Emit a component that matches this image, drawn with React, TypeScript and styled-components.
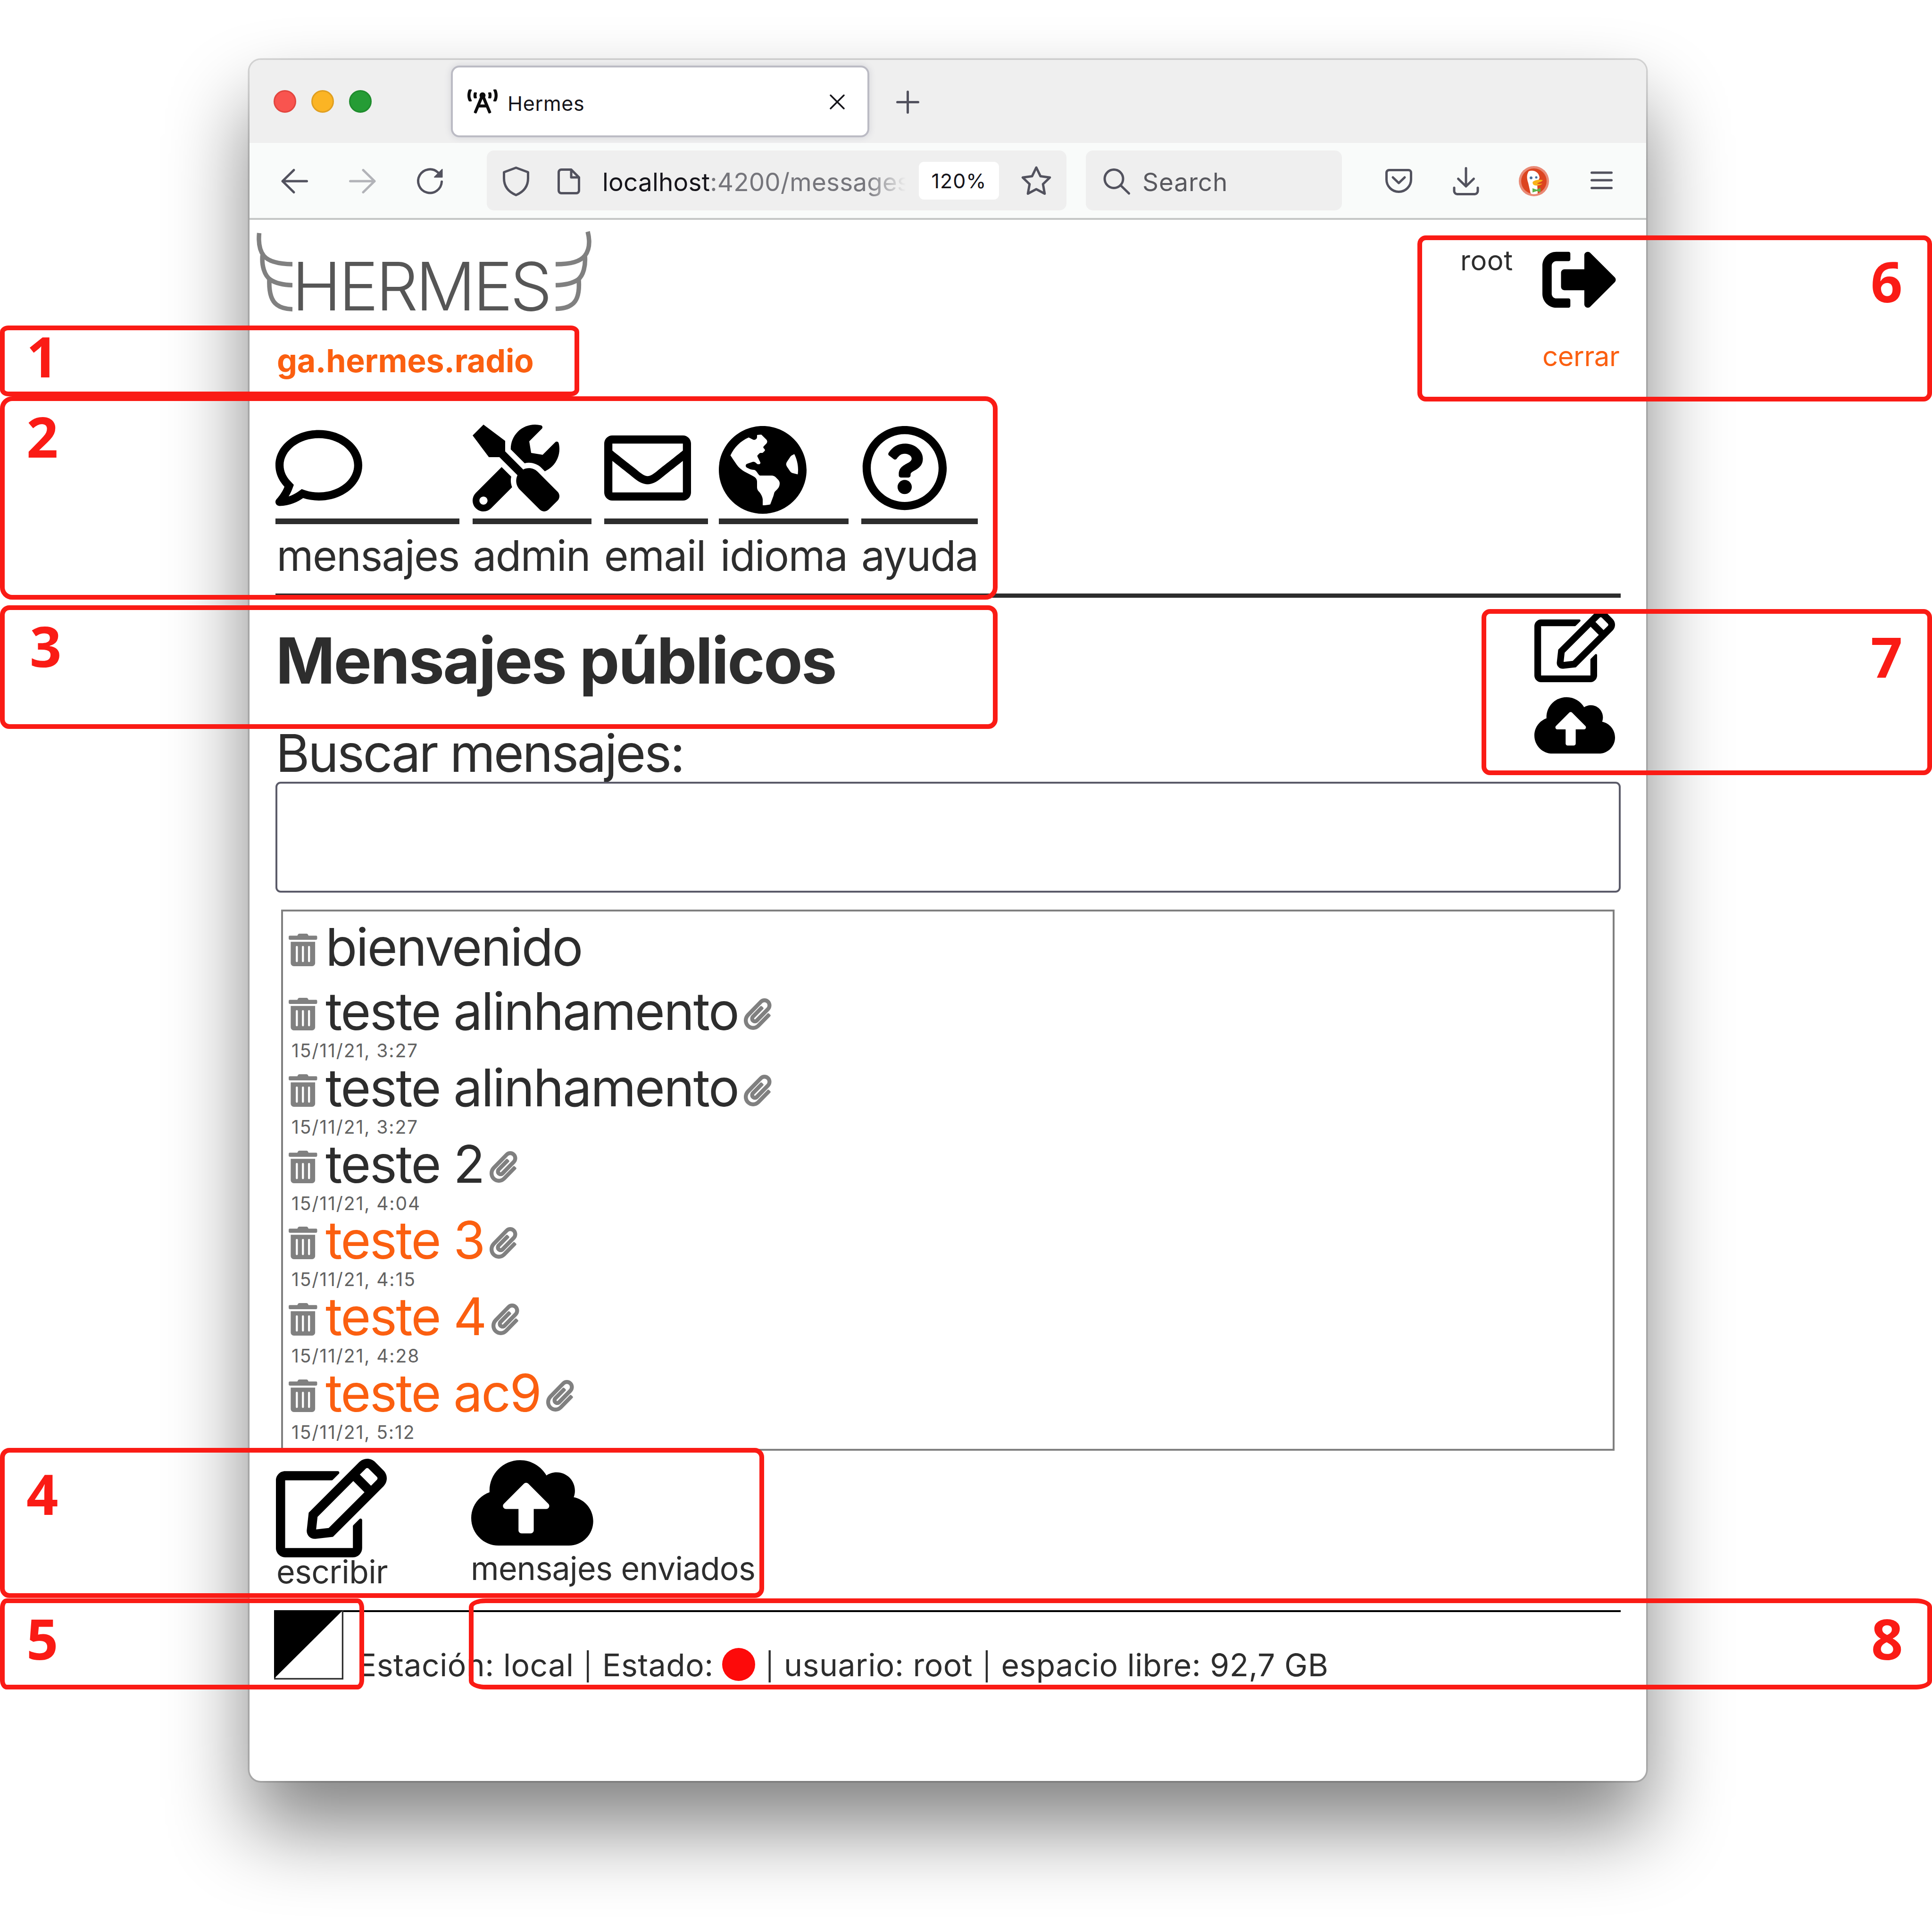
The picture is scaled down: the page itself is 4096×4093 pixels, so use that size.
import React from 'react';
import styled, { createGlobalStyle, css } from 'styled-components';
import type { IconType } from 'react-icons';
import {
  FaBroadcastTower,
  FaCloudUploadAlt,
  FaGlobeAmericas,
  FaPaperclip,
  FaRegComment,
  FaRegEdit,
  FaRegEnvelope,
  FaRegQuestionCircle,
  FaSignOutAlt,
  FaTools,
  FaTrashAlt,
} from 'react-icons/fa';

const ink = '#2d2d2d';
const orange = '#fb5f10';
const red = '#fa1b15';
const chromeIcon = '#52525e';

const GlobalStyle = createGlobalStyle`
  *, *::before, *::after { box-sizing: border-box; }
  body { margin: 0; background: #fff; }
  svg { display: block; flex: none; }
  h1, p { margin: 0; }
`;

const Stage = styled.main`
  position: relative;
  width: 4096px;
  height: 4093px;
  padding: 127px 604px 0 529px;
  overflow: hidden;
  background: #fff;
  color: ${ink};
  font-family: Inter, 'Liberation Sans', sans-serif;
`;

const BrowserWindow = styled.div`
  width: 2961px;
  height: 3648px;
  display: flex;
  flex-direction: column;
  background: #fff;
  border-radius: 24px;
  box-shadow:
    0 0 0 3.5px rgba(0, 0, 0, 0.15),
    0 98px 172px rgba(0, 0, 0, 0.49);
`;

/* ---------- browser chrome ---------- */

const TabBar = styled.div`
  height: 176px;
  flex: none;
  display: flex;
  align-items: center;
  padding-left: 51px;
  background: #efefef;
  border-radius: 24px 24px 0 0;
`;

const Lights = styled.div`
  display: flex;
  gap: 32px;
`;

const Light = styled.span<{ $color: string; $edge: string }>`
  width: 48px;
  height: 48px;
  border-radius: 50%;
  background: ${(p) => p.$color};
  border: 3px solid ${(p) => p.$edge};
`;

const Tab = styled.div`
  width: 879px;
  height: 144px;
  margin: 0 61px 0 172px;
  padding: 0 48px 0 31px;
  display: flex;
  align-items: center;
  background: #fff;
  border-radius: 14px;
  box-shadow:
    0 0 0 4px #bbbbc4,
    0 0 14px 5px rgba(90, 90, 120, 0.16);
`;

const TabTitle = styled.span`
  flex: 1;
  margin-left: 21px;
  padding-top: 8px;
  font-size: 43px;
  line-height: 56px;
  letter-spacing: 0.7px;
  color: #15141a;
`;

const Toolbar = styled.div`
  height: 163px;
  flex: none;
  display: flex;
  align-items: center;
  padding-left: 67px;
  background: #f9fbfa;
  border-bottom: 4px solid #c5c7c6;
`;

const ToolIcon = styled.span<{ $before?: number; $faded?: boolean; $tone?: string }>`
  flex: none;
  margin: 3px 0 0 ${(p) => p.$before ?? 0}px;
  color: ${(p) => p.$tone ?? chromeIcon};
  opacity: ${(p) => (p.$faded ? 0.42 : 1)};

  svg {
    fill: none;
    stroke: currentColor;
    stroke-width: 5;
    stroke-linecap: round;
    stroke-linejoin: round;
    overflow: visible;
  }
`;

const Field = styled.div<{ $width: number; $before: number; $pad: number }>`
  width: ${(p) => p.$width}px;
  height: 127px;
  flex: none;
  display: flex;
  align-items: center;
  margin-left: ${(p) => p.$before}px;
  padding-left: ${(p) => p.$pad}px;
  background: #efefef;
  border-radius: 15px;
`;

const Address = styled.span`
  width: 650px;
  margin-left: 47px;
  padding-top: 7px;
  overflow: hidden;
  white-space: nowrap;
  font-size: 53px;
  line-height: 76px;
  letter-spacing: 0.2px;
  color: #75757b;
  mask-image: linear-gradient(to right, #000 86%, transparent 99%);
`;

const Host = styled.span`
  color: #15141a;
`;

const ZoomBadge = styled.span`
  width: 170px;
  height: 80px;
  margin-left: 21px;
  border-radius: 11px;
  background: #fff;
  color: #15141a;
  font-size: 43px;
  line-height: 80px;
  letter-spacing: 1px;
  text-align: center;
`;

const Placeholder = styled.span`
  margin-left: 26px;
  padding-top: 7px;
  font-size: 53px;
  line-height: 76px;
  letter-spacing: 0.9px;
  color: #58585e;
`;

/* ---------- page ---------- */

const Header = styled.header`
  height: 434px;
  flex: none;
  display: flex;
  justify-content: space-between;
  padding: 0 52px 0 11px;
`;

const Brand = styled.div`
  padding-top: 20px;
`;

const Logo = styled.div`
  height: 176px;
  display: flex;

  svg {
    fill: none;
    stroke: #808080;
    stroke-width: 9.5;
  }
`;

const LogoText = styled.span`
  width: 554px;
  padding-top: 65px;
  font-weight: 300;
  font-size: 141px;
  line-height: 112px;
  letter-spacing: -5.2px;
  text-indent: -1px;
  white-space: nowrap;
  color: #565656;
`;

const Station = styled.p`
  margin: 57px 0 0 47px;
  font-weight: 700;
  font-size: 68px;
  line-height: 90px;
  letter-spacing: -0.29px;
  color: ${orange};
`;

const Account = styled.div`
  display: flex;
  padding-top: 48px;
  font-size: 58px;
  line-height: 70px;
`;

const UserName = styled.span`
  width: 174px;
  padding-top: 3px;
  letter-spacing: 0.6px;
`;

const Logout = styled.a`
  width: 168px;
  letter-spacing: -0.42px;
  color: ${orange};

  svg {
    width: 158px;
    height: 158px;
    margin-bottom: 48px;
    color: #000;
  }
`;

const Nav = styled.nav`
  display: flex;
  flex: none;
  padding-left: 54.6px;
`;

const NavItem = styled.a<{ $width: number; $after: number }>`
  width: ${(p) => p.$width}px;
  margin-right: ${(p) => p.$after}px;
`;

const NavIcon = styled.span<{ $wide?: boolean }>`
  display: block;
  height: 211px;
  border-bottom: 12px solid ${ink};
  color: #000;

  svg {
    width: ${(p) => (p.$wide ? 186 : 184)}px;
    height: ${(p) => (p.$wide ? 192 : 184)}px;
  }
`;

const NavLabel = styled.span<{ $indent: number }>`
  display: block;
  margin-top: 12px;
  text-indent: ${(p) => p.$indent}px;
  font-size: 89px;
  line-height: 110px;
  letter-spacing: -1.6px;
  white-space: nowrap;
`;

const Rule = styled.hr`
  width: 2852px;
  height: 8.5px;
  flex: none;
  margin: 25px 0 0 54.6px;
  border: 0;
  background: ${ink};
`;

const Intro = styled.section`
  height: 390px;
  flex: none;
  display: flex;
  justify-content: space-between;
  padding: 0 66px 0 55.5px;
`;

const Title = styled.h1`
  padding-top: 53.5px;
  font-weight: 700;
  font-size: 135px;
  line-height: 160px;
  letter-spacing: -2.75px;
`;

const SearchLabel = styled.label`
  display: block;
  margin-top: 56px;
  font-size: 110px;
  line-height: 120px;
  letter-spacing: -3.4px;
`;

const Shortcuts = styled.div`
  display: flex;
  flex-direction: column;
  gap: 23px;
  padding-top: 27px;
  color: #000;
`;

const Scaled = styled.span<{ $w: number; $h: number }>`
  svg {
    width: ${(p) => p.$w}px;
    height: ${(p) => p.$h}px;
  }
`;

const SearchInput = styled.input`
  width: 2852px;
  height: 235px;
  flex: none;
  margin-left: 54.6px;
  padding: 0 30px;
  border: 4px solid #5b5b69;
  border-radius: 11px;
  background: #fff;
  font: 110px Inter, sans-serif;
`;

const MessageList = styled.ul`
  width: 2827px;
  height: 1147.5px;
  flex: none;
  margin: 36px 0 0 67px;
  padding: 24.5px 0 0 12px;
  border: 4.4px solid #808080;
  list-style: none;
`;

const Message = styled.li<{ $dated: boolean }>`
  height: ${(p) => (p.$dated ? 161.8 : 136)}px;
`;

const MessageLine = styled.div<{ $fresh?: boolean }>`
  display: flex;
  align-items: center;
  height: 102px;
  font-size: 110px;
  line-height: 102px;
  letter-spacing: -2.65px;
  white-space: nowrap;
  ${(p) =>
    p.$fresh &&
    css`
      color: ${orange};
    `}
`;

const RowIcon = styled.span<{ $h: number; $before?: number }>`
  margin: 13px 0 0 ${(p) => p.$before ?? 0}px;
  color: #808080;

  svg {
    width: 60.5px;
    height: ${(p) => p.$h}px;
  }
`;

const Subject = styled.span`
  margin-left: 17.5px;
`;

const Stamp = styled.p`
  padding: 8px 0 0 6px;
  font-size: 39px;
  line-height: 50px;
  letter-spacing: 1.9px;
  color: #626262;
`;

const Actions = styled.div`
  height: 338.3px;
  flex: none;
  display: flex;
  padding-left: 56px;
`;

const Action = styled.a<{ $top: number; $width: number }>`
  width: ${(p) => p.$width}px;
  padding-top: ${(p) => p.$top}px;
  color: #000;
`;

const ActionLabel = styled.span<{ $gap: number; $shift: number }>`
  display: block;
  margin: ${(p) => p.$gap}px 0 0 ${(p) => p.$shift}px;
  font-size: 68px;
  line-height: 60px;
  letter-spacing: -0.67px;
  white-space: nowrap;
  color: ${ink};
`;

const Footer = styled.footer`
  width: 2852px;
  flex: none;
  display: flex;
  margin-left: 54.6px;
  border-top: 4px solid #000;
`;

const Contrast = styled.button`
  width: 147px;
  height: 147px;
  margin: -4px 31px 0 -3px;
  padding: 0;
  border: 0;
  background: #fff;
`;

const Status = styled.p`
  display: flex;
  align-items: center;
  height: 80px;
  margin-top: 74px;
  font-size: 66px;
  line-height: 80px;
  letter-spacing: 0.5px;
  white-space: pre;
`;

const Bar = styled.span`
  margin: 0 1.4px;
  font-size: 57px;
`;

const Dot = styled.span`
  width: 70px;
  height: 70px;
  margin: -6px 20px 0 18px;
  border-radius: 50%;
  background: #fd0a0a;
`;

/* ---------- numbered call-outs laid over the window ---------- */

const Callout = styled.div<{ $x: number; $y: number; $w: number; $h: number; $r: string }>`
  position: absolute;
  left: ${(p) => p.$x}px;
  top: ${(p) => p.$y}px;
  width: ${(p) => p.$w}px;
  height: ${(p) => p.$h}px;
  border: 10.9px solid ${red};
  border-radius: ${(p) => p.$r};
`;

const CalloutNumber = styled.span<{ $x: number; $base: number }>`
  position: absolute;
  left: ${(p) => p.$x}px;
  top: ${(p) => p.$base - 104}px;
  font-family: 'Open Sans', 'Noto Sans', sans-serif;
  font-weight: 700;
  font-size: 118px;
  line-height: 118px;
  color: ${red};
`;

const callouts = [
  { n: 1, x: 0, y: 690, w: 1228, h: 149.5, r: '18px / 14px', nx: 56, base: 800 },
  { n: 2, x: 0, y: 839.7, w: 2115, h: 431.8, r: '26px', nx: 56, base: 970 },
  { n: 3, x: 0, y: 1283, w: 2115, h: 261.6, r: '20px', nx: 63, base: 1413.5 },
  { n: 4, x: 0, y: 3068.8, w: 1619.8, h: 318.2, r: '20px', nx: 56, base: 3210.5 },
  { n: 5, x: 0, y: 3387.6, w: 771.8, h: 193.2, r: '14px / 20px', nx: 56, base: 3518 },
  { n: 6, x: 3004.8, y: 498.6, w: 1091.2, h: 352.4, r: '18px', nx: 3966, base: 640.5 },
  { n: 7, x: 3141.4, y: 1291, w: 954.6, h: 352, r: '18px', nx: 3966, base: 1436.8 },
  { n: 8, x: 994, y: 3387.6, w: 3102, h: 193.2, r: '36px / 18px', nx: 3967, base: 3518 },
];

interface NavEntry {
  label: string;
  icon: IconType;
  width: number;
  after: number;
  indent: number;
  wide?: boolean;
}

const navItems: NavEntry[] = [
  { label: 'mensajes', icon: FaRegComment, width: 390.7, after: 28.1, indent: 3 },
  { label: 'admin', icon: FaTools, width: 251.8, after: 27.1, indent: 0 },
  { label: 'email', icon: FaRegEnvelope, width: 219.4, after: 23.4, indent: -0.5 },
  { label: 'idioma', icon: FaGlobeAmericas, width: 274.7, after: 27.7, indent: 3, wide: true },
  { label: 'ayuda', icon: FaRegQuestionCircle, width: 246.5, after: 0, indent: -0.5 },
];

const messages: { subject: string; date?: string; fresh?: boolean }[] = [
  { subject: 'bienvenido' },
  { subject: 'teste alinhamento', date: '15/11/21, 3:27' },
  { subject: 'teste alinhamento', date: '15/11/21, 3:27' },
  { subject: 'teste 2', date: '15/11/21, 4:04' },
  { subject: 'teste 3', date: '15/11/21, 4:15', fresh: true },
  { subject: 'teste 4', date: '15/11/21, 4:28', fresh: true },
  { subject: 'teste ac9', date: '15/11/21, 5:12', fresh: true },
];

function Chrome() {
  return (
    <>
      <TabBar>
        <Lights>
          <Light $color="#f9544f" $edge="#e2463f" />
          <Light $color="#fbb424" $edge="#e09f20" />
          <Light $color="#259c35" $edge="#1f8c2d" />
        </Lights>
        <Tab>
          <FaBroadcastTower color="#0c0c0d" size={64} />
          <TabTitle>Hermes</TabTitle>
          <ToolIcon $tone="#15141a">
            <svg width="32" height="32" viewBox="0 0 32 32">
              <path d="M2 1 30 29M30 1 2 29" strokeWidth="3.5" />
            </svg>
          </ToolIcon>
        </Tab>
        <ToolIcon>
          <svg width="49" height="49" viewBox="0 0 49 49">
            <path d="M24.5 2.5v44M2.5 24.5h44" />
          </svg>
        </ToolIcon>
      </TabBar>
      <Toolbar>
        <ToolIcon>
          <svg width="57" height="52" viewBox="0 0 57 52">
            <path d="M27 2.5 3 26l24 23.5M3 26h51.5" />
          </svg>
        </ToolIcon>
        <ToolIcon $before={87} $faded>
          <svg width="57" height="52" viewBox="0 0 57 52">
            <path d="M30 2.5 54 26 30 49.5M54 26H2.5" />
          </svg>
        </ToolIcon>
        <ToolIcon $before={87}>
          <svg width="56" height="56" viewBox="0 0 56 56">
            <path d="M52.500 29a25 25 0 1 1-8-19.500L51 15.500" />
            <path d="M53.500 3v16.500H37z" fill="currentColor" strokeWidth="2" />
          </svg>
        </ToolIcon>
        <Field $width={1228.5} $before={92} $pad={33}>
          <ToolIcon>
            <svg width="58" height="63" viewBox="0 0 58 63">
              <path d="M29 2.5 54.5 12v13c0 17-9 28.5-25.5 35.500C12.500 53.500 3.500 42 3.500 25V12z" />
            </svg>
          </ToolIcon>
          <ToolIcon $before={59}>
            <svg width="48" height="55" viewBox="0 0 48 55">
              <path d="M29 2.5H8A5.5 5.5 0 0 0 2.5 8v39A5.5 5.5 0 0 0 8 52.5h32a5.5 5.5 0 0 0 5.5-5.500V19zM29 2.500V19h16.500" />
            </svg>
          </ToolIcon>
          <Address>
            <Host>localhost</Host>:4200/messages
          </Address>
          <ZoomBadge>120%</ZoomBadge>
          <ToolIcon $before={47}>
            <svg width="64" height="64" viewBox="0 0 64 64">
              <path d="M32 3l8.800 18.400 20 2.800-14.600 14.100 3.600 20.200L32 49l-17.800 9.500 3.600-20.200L3.200 24.200l20-2.800z" />
            </svg>
          </ToolIcon>
        </Field>
        <Field $width={543} $before={41.5} $pad={37}>
          <ToolIcon>
            <svg width="57" height="55" viewBox="0 0 57 55">
              <circle cx="22.5" cy="22" r="19.5" />
              <path d="M36.5 35.5 54.5 53" />
            </svg>
          </ToolIcon>
          <Placeholder>Search</Placeholder>
        </Field>
        <ToolIcon $before={92}>
          <svg width="57" height="52" viewBox="0 0 57 52">
            <path d="M8 2.5h41a5.5 5.5 0 0 1 5.5 5.5v14.500a26 26 0 0 1-52 0V8A5.500 5.500 0 0 1 8 2.500z" />
            <path d="M16 18l12.500 12L41 18" />
          </svg>
        </ToolIcon>
        <ToolIcon $before={86}>
          <svg width="56" height="60" viewBox="0 0 56 60">
            <path d="M28 2.5v38M11.5 25 28 41l16.500-16M3 44v7a6.500 6.500 0 0 0 6.500 6.500h37A6.500 6.500 0 0 0 53 51v-7" />
          </svg>
        </ToolIcon>
        <ToolIcon $before={84}>
          <svg width="64" height="64" viewBox="0 0 64 64">
            <g stroke="none">
              <circle cx="32" cy="32" r="32" fill="#e98a76" />
              <circle cx="32" cy="32" r="27" fill="#dc4420" />
              <path d="M21 11c10-4 22 1 23 14l-5 10 1 23c-5 2-11 2-15 0l-5-22c-3-9-4-17 1-25z" fill="#fff" />
              <circle cx="26" cy="25" r="3" fill="#4a6f9c" />
              <circle cx="37" cy="24" r="2.5" fill="#4a6f9c" />
              <path d="M30 33c5-4 15-5 21-3-3 4-10 5-13 7 4 1 8 1 12 0-4 5-18 6-20 1-1-2-1-4 0-5z" fill="#f9b218" />
              <path d="M29 47l9 3 8-4v9l-8-2-9 3z" fill="#5fb24a" />
            </g>
          </svg>
        </ToolIcon>
        <ToolIcon $before={88}>
          <svg width="47" height="42" viewBox="0 0 47 42">
            <path d="M2.5 3h42M2.5 19h42M2.5 35.5h42" />
          </svg>
        </ToolIcon>
      </Toolbar>
    </>
  );
}

function Masthead() {
  return (
    <Header>
      <Brand>
        <Logo>
          <svg width="80" height="176" viewBox="0 0 80 176">
            <path d="M9.5 8C8 24 9 43 19 56c10 12 30 17.500 61 18M16.500 55c-2 22 4 43 17 52 12 8 27 11 46.500 11.500M31 107c-1 28 5 45 16 53 9 7 19 9 33 9.500" />
          </svg>
          <LogoText>HERMES</LogoText>
          <svg width="80" height="176" viewBox="634 0 80 176">
            <path d="M706 5c5 20 4 38-6 51-10 12-28 18-62 18M700 55c2 22-3 43-15 52-12 8-26 11-47 11.500M687 107c2 28-3 44-14 52-9 7-19 9-35 9.500" />
          </svg>
        </Logo>
        <Station>ga.hermes.radio</Station>
      </Brand>
      <Account>
        <UserName>root</UserName>
        <Logout>
          <FaSignOutAlt />
          cerrar
        </Logout>
      </Account>
    </Header>
  );
}

export default function App() {
  return (
    <Stage>
      <GlobalStyle />
      <BrowserWindow>
        <Chrome />
        <Masthead />
        <Nav>
          {navItems.map(({ label, icon: Icon, width, after, indent, wide }) => (
            <NavItem key={label} $width={width} $after={after}>
              <NavIcon $wide={wide}>
                <Icon />
              </NavIcon>
              <NavLabel $indent={indent}>{label}</NavLabel>
            </NavItem>
          ))}
        </Nav>
        <Rule />
        <Intro>
          <div>
            <Title>Mensajes públicos</Title>
            <SearchLabel htmlFor="search">Buscar mensajes:</SearchLabel>
          </div>
          <Shortcuts>
            <Scaled $w={171} $h={152}>
              <FaRegEdit />
            </Scaled>
            <Scaled $w={171} $h={137}>
              <FaCloudUploadAlt />
            </Scaled>
          </Shortcuts>
        </Intro>
        <SearchInput id="search" />
        <MessageList>
          {messages.map(({ subject, date, fresh }, i) => (
            <Message key={i} $dated={!!date}>
              <MessageLine $fresh={fresh}>
                <RowIcon $h={69}>
                  <FaTrashAlt />
                </RowIcon>
                <Subject>{subject}</Subject>
                {date && (
                  <RowIcon $h={67} $before={11}>
                    <FaPaperclip />
                  </RowIcon>
                )}
              </MessageLine>
              {date && <Stamp>{date}</Stamp>}
            </Message>
          ))}
        </MessageList>
        <Actions>
          <Action $top={17} $width={414}>
            <Scaled $w={235} $h={209}>
              <FaRegEdit />
            </Scaled>
            <ActionLabel $gap={0} $shift={1}>
              escribir
            </ActionLabel>
          </Action>
          <Action $top={6.5} $width={640}>
            <Scaled $w={258.7} $h={207}>
              <FaCloudUploadAlt />
            </Scaled>
            <ActionLabel $gap={5} $shift={-1}>
              mensajes enviados
            </ActionLabel>
          </Action>
        </Actions>
        <Footer>
          <Contrast aria-label="contraste">
            <svg width="147" height="147" viewBox="0 0 147 147">
              <rect x="1.5" y="1.5" width="144" height="144" fill="#fff" stroke={ink} strokeWidth="3.5" />
              <path d="M0 0h146L2 143H0z" fill="#000" />
            </svg>
          </Contrast>
          <Status>
            <span>
              Estación: local <Bar>|</Bar> Estado:
            </span>
            <Dot />
            <span>
              <Bar>|</Bar> usuario: root <Bar>|</Bar> espacio libre: 92,7 GB
            </span>
          </Status>
        </Footer>
      </BrowserWindow>
      {callouts.map((c) => (
        <React.Fragment key={c.n}>
          <Callout $x={c.x} $y={c.y} $w={c.w} $h={c.h} $r={c.r} />
          <CalloutNumber $x={c.nx} $base={c.base}>
            {c.n}
          </CalloutNumber>
        </React.Fragment>
      ))}
    </Stage>
  );
}
